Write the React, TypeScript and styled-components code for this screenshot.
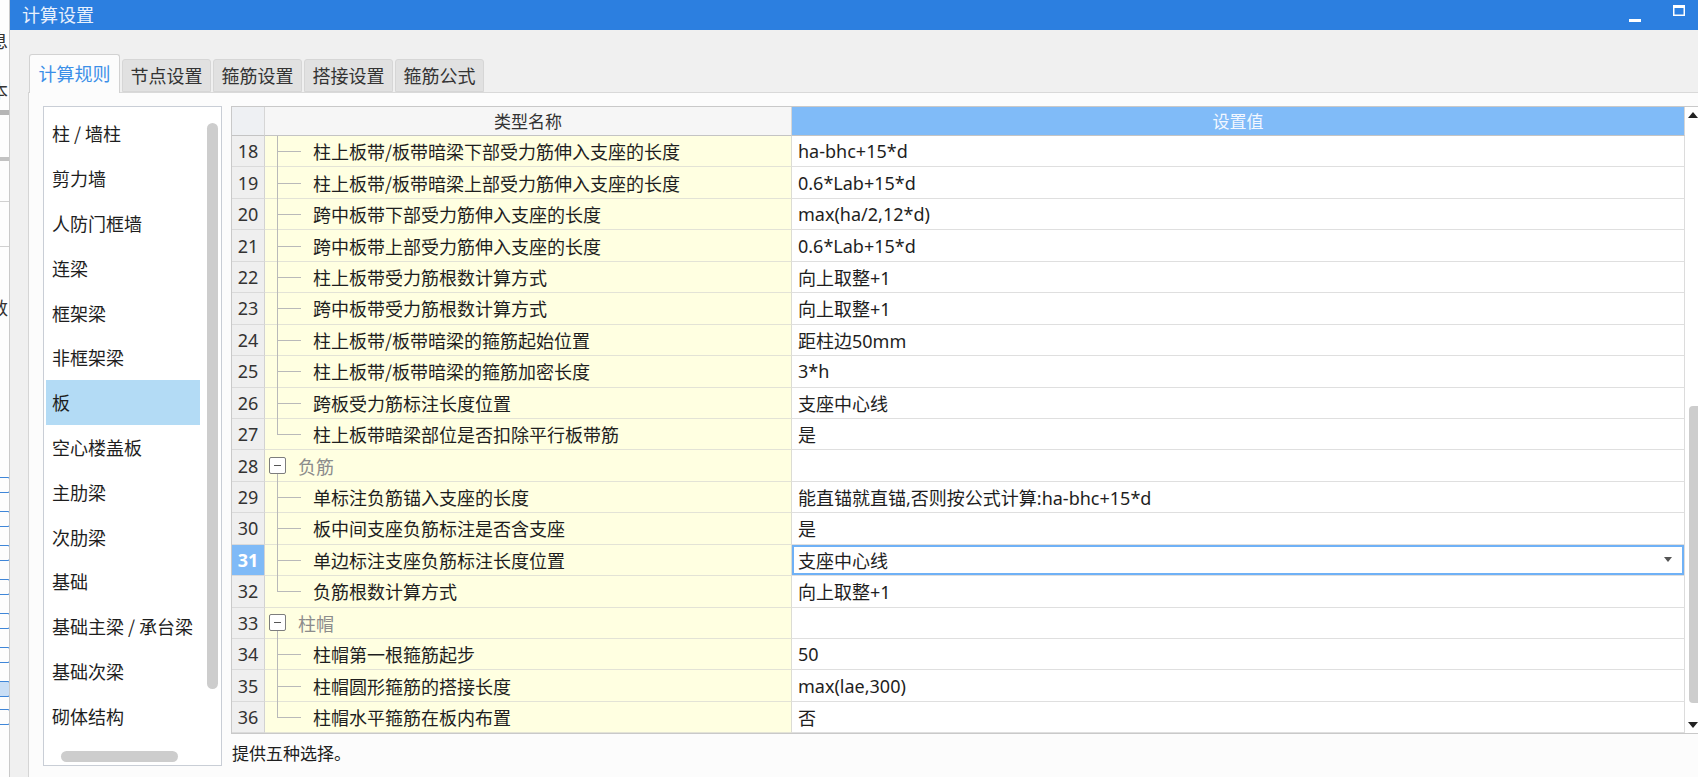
import React from 'react'
import styled, { createGlobalStyle } from 'styled-components'

const GlobalStyle = createGlobalStyle`
  html, body { margin: 0; padding: 0; }
  body {
    width: 1698px;
    height: 777px;
    overflow: hidden;
    background: #f0f0f0;
    font-family: "Noto Sans", "Noto Sans CJK SC", sans-serif;
    color: #1e1e1e;
  }
  * { box-sizing: border-box; }
`

type Kind = 'item' | 'last' | 'group'

interface RowData {
  n: number
  name: string
  value?: string
  kind: Kind
}

const ROWS: RowData[] = [
  { n: 18, name: '柱上板带/板带暗梁下部受力筋伸入支座的长度', value: 'ha-bhc+15*d', kind: 'item' },
  { n: 19, name: '柱上板带/板带暗梁上部受力筋伸入支座的长度', value: '0.6*Lab+15*d', kind: 'item' },
  { n: 20, name: '跨中板带下部受力筋伸入支座的长度', value: 'max(ha/2,12*d)', kind: 'item' },
  { n: 21, name: '跨中板带上部受力筋伸入支座的长度', value: '0.6*Lab+15*d', kind: 'item' },
  { n: 22, name: '柱上板带受力筋根数计算方式', value: '向上取整+1', kind: 'item' },
  { n: 23, name: '跨中板带受力筋根数计算方式', value: '向上取整+1', kind: 'item' },
  { n: 24, name: '柱上板带/板带暗梁的箍筋起始位置', value: '距柱边50mm', kind: 'item' },
  { n: 25, name: '柱上板带/板带暗梁的箍筋加密长度', value: '3*h', kind: 'item' },
  { n: 26, name: '跨板受力筋标注长度位置', value: '支座中心线', kind: 'item' },
  { n: 27, name: '柱上板带暗梁部位是否扣除平行板带筋', value: '是', kind: 'last' },
  { n: 28, name: '负筋', kind: 'group' },
  { n: 29, name: '单标注负筋锚入支座的长度', value: '能直锚就直锚,否则按公式计算:ha-bhc+15*d', kind: 'item' },
  { n: 30, name: '板中间支座负筋标注是否含支座', value: '是', kind: 'item' },
  { n: 31, name: '单边标注支座负筋标注长度位置', value: '支座中心线', kind: 'item' },
  { n: 32, name: '负筋根数计算方式', value: '向上取整+1', kind: 'last' },
  { n: 33, name: '柱帽', kind: 'group' },
  { n: 34, name: '柱帽第一根箍筋起步', value: '50', kind: 'item' },
  { n: 35, name: '柱帽圆形箍筋的搭接长度', value: 'max(lae,300)', kind: 'item' },
  { n: 36, name: '柱帽水平箍筋在板内布置', value: '否', kind: 'last' },
]

const SELECTED_ROW = 31

const CATEGORIES = [
  '柱 / 墙柱', '剪力墙', '人防门框墙', '连梁', '框架梁', '非框架梁', '板',
  '空心楼盖板', '主肋梁', '次肋梁', '基础', '基础主梁 / 承台梁', '基础次梁', '砌体结构',
]

const TABS = ['计算规则', '节点设置', '箍筋设置', '搭接设置', '箍筋公式']

/* ---------- page + background app strip ---------- */

const Page = styled.div`
  display: flex;
  width: 1698px;
  height: 777px;
`

const BackStrip = styled.div`
  width: 10px;
  flex-shrink: 0;
  background: #fdfdfd;
  border-right: 1px solid #c9c9c9;
  overflow: hidden;
  display: flex;
  flex-direction: column;
  font-family: "Noto Sans CJK SC", sans-serif;
  font-size: 18px;
  color: #333;
`

const StripGlyph = styled.div<{ $top: number }>`
  margin-top: ${p => p.$top}px;
  margin-left: -10px;
  line-height: 20px;
  white-space: nowrap;
`

const StripBar = styled.div<{ $top: number; $h: number; $c: string }>`
  margin-top: ${p => p.$top}px;
  height: ${p => p.$h}px;
  background: ${p => p.$c};
`

const StripIcon = styled.div<{ $top: number; $active?: boolean }>`
  margin-top: ${p => p.$top}px;
  margin-left: -4px;
  width: 14px;
  height: 16px;
  border: 1.5px solid #3f86d8;
  border-radius: 2px;
  background: ${p => (p.$active ? '#c9def5' : 'transparent')};
`

/* ---------- window ---------- */

const Window = styled.div`
  flex: 1;
  min-width: 0;
  display: flex;
  flex-direction: column;
`

const TitleBar = styled.div`
  height: 30px;
  flex-shrink: 0;
  background: #2c7fe0;
  display: flex;
  align-items: center;
  padding: 0 0 0 12px;
  color: #e8f0fc;
  font-family: "Noto Sans CJK SC", sans-serif;
  font-size: 18px;
`

const TitleText = styled.div`
  flex: 1;
  margin-top: -2px;
`

const WinButtons = styled.div`
  display: flex;
  align-items: center;
  gap: 31px;
  padding-right: 13px;
  height: 100%;
`

const Body = styled.div`
  flex: 1;
  display: flex;
  flex-direction: column;
  padding-left: 19px;
  min-height: 0;
`

const TabBar = styled.div`
  display: flex;
  align-items: flex-end;
  gap: 2px;
  padding-top: 24px;
  height: 62px;
  flex-shrink: 0;
`

const Tab = styled.div<{ $active?: boolean }>`
  width: ${p => (p.$active ? 91 : 89)}px;
  height: ${p => (p.$active ? 39 : 33)}px;
  display: flex;
  align-items: center;
  justify-content: center;
  font-family: "Noto Sans CJK SC", sans-serif;
  font-size: 18px;
  color: ${p => (p.$active ? '#3b8fe8' : '#333')};
  background: ${p => (p.$active ? '#fcfcfc' : '#e1e1e1')};
  border: 1px solid ${p => (p.$active ? '#d2d2d2' : '#d6d6d6')};
  border-bottom: ${p => (p.$active ? 'none' : '1px solid #d6d6d6')};
  border-radius: 3px 3px 0 0;
  margin-bottom: ${p => (p.$active ? '-1px' : '0')};
  position: relative;
  z-index: ${p => (p.$active ? 1 : 0)};
  padding-bottom: ${p => (p.$active ? 3 : 1)}px;
`

const Panel = styled.div`
  flex: 1;
  min-height: 0;
  margin-left: -1px;
  background: #fcfcfc;
  border-left: 1px solid #d5d5d5;
  border-top: 1px solid #d9d9d9;
  display: flex;
  align-items: flex-start;
  gap: 9px;
  padding: 13px 0 0 14px;
`

/* ---------- category list ---------- */

const List = styled.div`
  width: 179px;
  height: 660px;
  flex-shrink: 0;
  background: #fff;
  border: 1px solid #c9ced6;
  padding: 4px 0 0 2px;
  position: relative;
  overflow: hidden;
`

const ListItem = styled.div<{ $selected?: boolean }>`
  width: 154px;
  height: 44.8px;
  display: flex;
  align-items: center;
  padding-left: 6px;
  font-family: "Noto Sans CJK SC", sans-serif;
  font-size: 18px;
  color: #1e1e1e;
  white-space: nowrap;
  background: ${p => (p.$selected ? '#b3dbf5' : 'transparent')};
`

const ListVThumb = styled.div`
  position: absolute;
  right: 3px;
  top: 16px;
  width: 11px;
  height: 566px;
  border-radius: 6px;
  background: #cdcdcd;
`

const ListHThumb = styled.div`
  position: absolute;
  left: 17px;
  bottom: 3px;
  width: 117px;
  height: 11px;
  border-radius: 6px;
  background: #cdcdcd;
`

/* ---------- settings grid ---------- */

const GridColumn = styled.div`
  flex: 1;
  min-width: 0;
  display: flex;
  flex-direction: column;
`

const Grid = styled.div`
  display: flex;
  background: #fff;
  border: 1px solid #c9c9c9;
  border-right: none;
`

const Table = styled.div`
  flex: 1;
  min-width: 0;
  display: flex;
  flex-direction: column;
`

const HeaderRow = styled.div`
  display: grid;
  grid-template-columns: 33px 527px 1fr;
  height: 29px;
  font-family: "Noto Sans CJK SC", sans-serif;
  font-size: 17px;
`

const HeadCell = styled.div<{ $bg: string; $fg: string }>`
  display: flex;
  align-items: center;
  justify-content: center;
  background: ${p => p.$bg};
  color: ${p => p.$fg};
  border-right: 1px solid #d6d6d6;
  border-bottom: 1px solid #c4c4c4;
  padding-bottom: 1px;
`

const Row = styled.div`
  display: grid;
  grid-template-columns: 33px 527px 1fr;
  height: 31.45px;
`

const NumCell = styled.div<{ $selected?: boolean }>`
  display: flex;
  align-items: center;
  justify-content: center;
  font-size: 18px;
  color: ${p => (p.$selected ? '#fff' : '#333')};
  font-weight: ${p => (p.$selected ? 700 : 400)};
  background: ${p => (p.$selected ? '#7fbaf7' : '#efefef')};
  border-right: 1px solid #d2d2d2;
  border-bottom: 1px solid #dadada;
`

const NameCell = styled.div<{ $group?: boolean }>`
  position: relative;
  display: flex;
  align-items: center;
  padding-left: ${p => (p.$group ? 4 : 48)}px;
  background: #ffffe1;
  border-right: 1px solid #dcdcd4;
  border-bottom: 1px solid #e3e3d6;
  font-family: "Noto Sans CJK SC", sans-serif;
  font-size: 18px;
  color: #1e1e1e;
  white-space: nowrap;
`

const TreeV = styled.span<{ $kind: Kind }>`
  position: absolute;
  left: 12px;
  top: ${p => (p.$kind === 'group' ? 'calc(50% + 8px)' : '0')};
  bottom: ${p => (p.$kind === 'last' ? '50%' : '-1px')};
  border-left: 1px solid #b9b9b9;
`

const TreeH = styled.span`
  position: absolute;
  left: 12px;
  top: 50%;
  width: 24px;
  border-top: 1px solid #b9b9b9;
`

const ExpandBox = styled.span`
  width: 17px;
  height: 17px;
  flex-shrink: 0;
  border: 1px solid #7d7d7d;
  border-radius: 2px;
  background: #fff;
  display: flex;
  align-items: center;
  justify-content: center;
  margin-right: 12px;
  &::before {
    content: '';
    width: 7px;
    border-top: 1.5px solid #555;
  }
`

const GroupText = styled.span`
  color: #8c8c8c;
`

const ValueCell = styled.div<{ $selected?: boolean }>`
  display: flex;
  align-items: center;
  padding-left: 6px;
  padding-right: 12px;
  font-size: 18px;
  color: #1e1e1e;
  white-space: nowrap;
  border-bottom: 1px solid #dfdfdf;
  border-right: 1px solid #dcdcdc;
  box-shadow: ${p => (p.$selected ? 'inset 0 0 0 2px #6fb1f6' : 'none')};
`

const ValueText = styled.span`
  flex: 1;
  font-family: "Noto Sans", "Noto Sans CJK SC", sans-serif;
`

const DropArrow = styled.span`
  width: 0;
  height: 0;
  border-left: 4px solid transparent;
  border-right: 4px solid transparent;
  border-top: 5px solid #555;
`

const ScrollCol = styled.div`
  width: 13px;
  flex-shrink: 0;
  display: flex;
  flex-direction: column;
  background: #fff;
`

const ScrollArrow = styled.div<{ $up?: boolean }>`
  height: 16px;
  display: flex;
  align-items: center;
  justify-content: flex-end;
  &::before {
    content: '';
    width: 0;
    height: 0;
    border-left: 5px solid transparent;
    border-right: 5px solid transparent;
    ${p => (p.$up ? 'border-bottom: 6px solid #222;' : 'border-top: 6px solid #222;')}
  }
`

const ScrollTrack = styled.div`
  flex: 1;
  padding-top: 283px;
  padding-left: 4px;
  padding-bottom: 14px;
  display: flex;
  flex-direction: column;
`

const ScrollThumb = styled.div`
  flex: 1;
  background: #cdcdcd;
  border-radius: 4px 0 0 4px;
`

const Hint = styled.div`
  height: 36px;
  display: flex;
  align-items: center;
  padding-left: 1px;
  font-family: "Noto Sans CJK SC", sans-serif;
  font-size: 17px;
  color: #1e1e1e;
`

const MinimizeIcon = () => (
  <svg width="13" height="14" viewBox="0 0 13 14">
    <rect x="0" y="11" width="12" height="3" fill="#fff" />
  </svg>
)

const MaximizeIcon = () => (
  <svg width="12" height="11" viewBox="0 0 12 11" style={{ marginTop: -10 }}>
    <rect x="0.75" y="0.75" width="10.5" height="9.5" fill="none" stroke="#fff" strokeWidth="1.5" />
    <rect x="0" y="0" width="12" height="3" fill="#fff" />
  </svg>
)

const TreeName: React.FC<{ row: RowData }> = ({ row }) => {
  if (row.kind === 'group') {
    return (
      <NameCell $group>
        <TreeV $kind="group" />
        <ExpandBox />
        <GroupText>{row.name}</GroupText>
      </NameCell>
    )
  }
  return (
    <NameCell>
      <TreeV $kind={row.kind} />
      <TreeH />
      {row.name}
    </NameCell>
  )
}

export default function App() {
  return (
    <>
      <GlobalStyle />
      <Page>
        <BackStrip>
          <StripGlyph $top={30}>息</StripGlyph>
          <StripGlyph $top={30}>本</StripGlyph>
          <StripBar $top={10} $h={5} $c="#b5b5b5" />
          <StripBar $top={42} $h={4} $c="#c2c2c2" />
          <StripBar $top={40} $h={1} $c="#d0d0d0" />
          <StripBar $top={44} $h={1} $c="#d0d0d0" />
          <StripGlyph $top={50}>数</StripGlyph>
          <StripIcon $top={160} />
          <StripIcon $top={18} />
          <StripIcon $top={18} />
          <StripIcon $top={18} />
          <StripIcon $top={18} />
          <StripIcon $top={18} />
          <StripIcon $top={18} $active />
          <StripIcon $top={12} />
        </BackStrip>
        <Window>
          <TitleBar>
            <TitleText>计算设置</TitleText>
            <WinButtons>
              <MinimizeIcon />
              <MaximizeIcon />
            </WinButtons>
          </TitleBar>
          <Body>
            <TabBar>
              {TABS.map((t, i) => (
                <Tab key={t} $active={i === 0}>{t}</Tab>
              ))}
            </TabBar>
            <Panel>
              <List>
                {CATEGORIES.map(c => (
                  <ListItem key={c} $selected={c === '板'}>{c}</ListItem>
                ))}
                <ListVThumb />
                <ListHThumb />
              </List>
              <GridColumn>
                <Grid>
                  <Table>
                    <HeaderRow>
                      <HeadCell $bg="#eef0f3" $fg="#333" />
                      <HeadCell $bg="#f6f6f6" $fg="#333">类型名称</HeadCell>
                      <HeadCell $bg="#80bbf8" $fg="#f2f7ff">设置值</HeadCell>
                    </HeaderRow>
                    {ROWS.map(r => {
                      const selected = r.n === SELECTED_ROW
                      return (
                        <Row key={r.n}>
                          <NumCell $selected={selected}>{r.n}</NumCell>
                          <TreeName row={r} />
                          <ValueCell $selected={selected}>
                            <ValueText>{r.value}</ValueText>
                            {selected && <DropArrow />}
                          </ValueCell>
                        </Row>
                      )
                    })}
                  </Table>
                  <ScrollCol>
                    <ScrollArrow $up />
                    <ScrollTrack>
                      <ScrollThumb />
                    </ScrollTrack>
                    <ScrollArrow />
                  </ScrollCol>
                </Grid>
                <Hint>提供五种选择。</Hint>
              </GridColumn>
            </Panel>
          </Body>
        </Window>
      </Page>
    </>
  )
}
